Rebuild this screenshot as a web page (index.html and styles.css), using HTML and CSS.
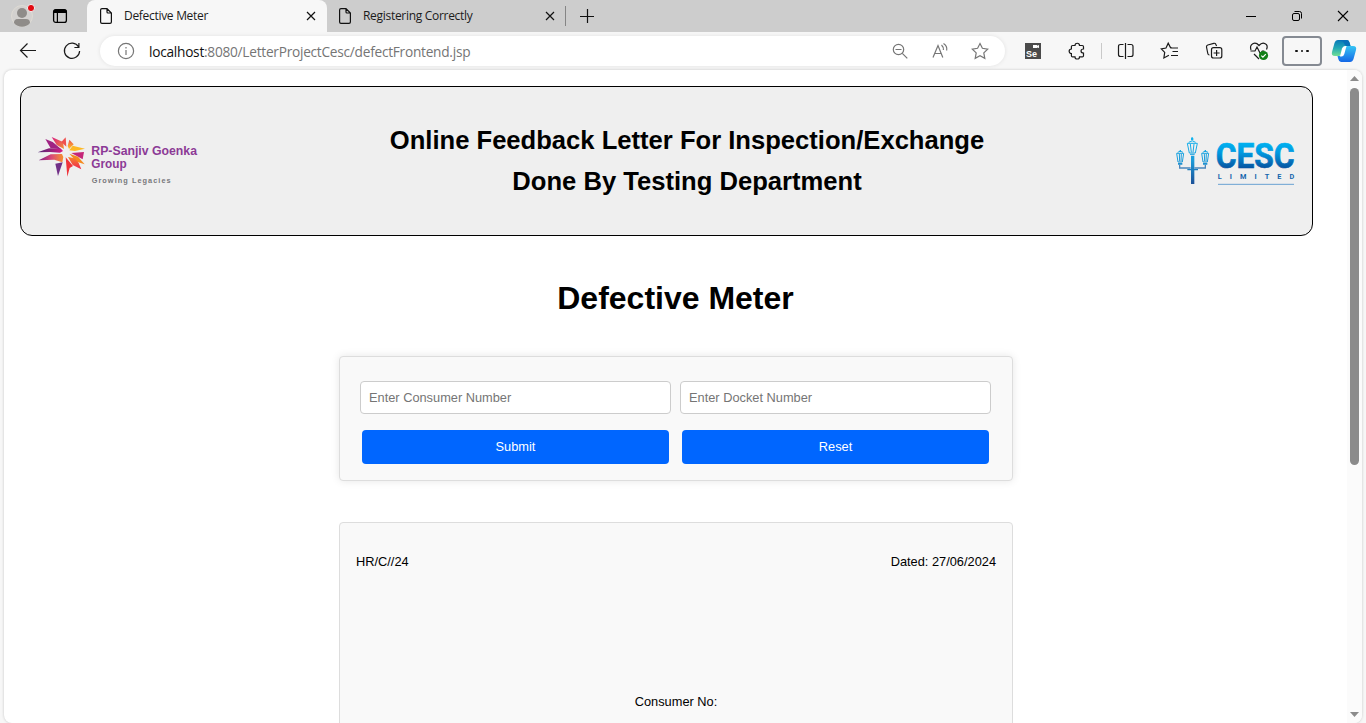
FILE: index.html
```html
<!DOCTYPE html>
<html lang="en">
<head>
<meta charset="utf-8">
<title>Defective Meter</title>
<link rel="stylesheet" href="styles.css">
</head>
<body>
<div class="browser">
  <div class="tabstrip">
    <svg class="avatar" width="26" height="28" viewBox="0 0 26 28"><circle cx="12" cy="16" r="10.5" fill="#d3d1cf" stroke="#dedbd4"/><circle cx="12" cy="13" r="5" fill="#8f8c89"/><path d="M4 23c0-5 4-4 8-4s8-1 8 4c-4 5-12 5-16 0z" fill="#8f8c89"/><circle cx="21" cy="8" r="3.6" fill="#e20b12" stroke="#eee"/></svg>
    <svg class="workspaces" width="16" height="16" viewBox="0 0 16 16"><rect x="1.600" y="1.600" width="12.800" height="12.800" rx="2.200" fill="none" stroke="#000" stroke-width="1.300"/><path d="M1.500 5V3Q1.500 1.500 3 1.500H13Q14.500 1.500 14.500 3V5ZM4.800 5H6V14H4.800Z"/></svg>
    <div class="tab active">
      <svg width="14" height="18" viewBox="0 0 14 18"><path d="M3 1.600h5l4.400 4.400v9q0 1.400-1.400 1.400H3q-1.400 0-1.400-1.400V3Q1.600 1.600 3 1.600zM8 1.800V5q0 1 1 1h3.300" fill="none" stroke="#111" stroke-width="1.200"/></svg>
      <span class="tab-title">Defective Meter</span>
      <svg class="close" width="10" height="10" viewBox="0 0 10 10"><path d="M1 1l8 8M9 1L1 9" stroke="#111" stroke-width="1.200"/></svg>
    </div>
    <div class="tab idle">
      <svg width="14" height="18" viewBox="0 0 14 18"><path d="M3 1.600h5l4.400 4.400v9q0 1.400-1.400 1.400H3q-1.400 0-1.400-1.400V3Q1.600 1.600 3 1.600zM8 1.800V5q0 1 1 1h3.300" fill="none" stroke="#111" stroke-width="1.200"/></svg>
      <span class="tab-title">Registering Correctly</span>
      <svg class="close" width="10" height="10" viewBox="0 0 10 10"><path d="M1 1l8 8M9 1L1 9" stroke="#111" stroke-width="1.200"/></svg>
    </div>
    <span class="tab-sep"></span>
    <svg class="new-tab" width="16" height="16" viewBox="0 0 16 16"><path d="M8.500 1v14M1 8.500h14" stroke="#111" stroke-width="1.200"/></svg>
    <div class="window-controls">
      <svg width="12" height="12" viewBox="0 0 12 12"><path d="M1 6.500h10" stroke="#000"/></svg>
      <svg width="12" height="12" viewBox="0 0 12 12"><g fill="none" stroke="#000"><rect x="1.500" y="3.500" width="7" height="7" rx="1.500"/><path d="M3.500 1.500h5q2 0 2 2v5"/></g></svg>
      <svg width="12" height="12" viewBox="0 0 12 12"><path d="M1 1l10 10M11 1L1 11" stroke="#000" stroke-width="1.100"/></svg>
    </div>
  </div>

  <div class="toolbar">
    <svg class="i back" viewBox="0 0 24 24"><path d="M20 11.500H4.500M11.500 4.500l-7 7 7 7"/></svg>
    <svg class="i reload" viewBox="0 0 24 24"><path d="M18.600 8A7.600 7.600 0 1 0 19.600 12M18.900 4v4.500h-4.500"/></svg>
    <div class="omnibox">
      <svg class="i gray" viewBox="0 0 24 24"><circle cx="12" cy="12" r="7.600"/><path d="M12 11v5M12 8v1.500"/></svg>
      <span class="url"><b>localhost</b>:8080/LetterProjectCesc/defectFrontend.jsp</span>
      <svg class="i gray" viewBox="0 0 24 24"><circle cx="10.500" cy="10.500" r="5.200"/><path d="M14.300 14.300l5 5M7.500 10.500h6"/></svg>
      <svg class="i gray" viewBox="0 0 24 24"><path d="M5 18.500L10 6.500l4.800 12M7 14.500h6.200M13.500 6q2.200 2 1.900 5M15.500 4.500q4 2.500 3.200 7"/></svg>
      <svg class="i gray" viewBox="0 0 24 24"><path d="M12 4.500l2.400 4.800 5.300.8-3.900 3.800 1 5.400-4.800-2.600-4.800 2.600 1-5.400-3.900-3.800 5.300-.8z"/></svg>
    </div>
    <svg class="i se" viewBox="0 0 24 24"><rect x="4" y="4" width="16" height="16" fill="#4b4b4b" stroke="none"/><path d="M12 6h4v.7l2-.7v3l-2-.6V9h-4z" fill="#fff" stroke="none"/><text x="5" y="18" textLength="11" lengthAdjust="spacingAndGlyphs">Se</text></svg>
    <svg class="i puzzle" viewBox="0 0 24 24"><path d="M10 6.500c0-3 4.500-3 4.500 0h2.800q1.200 0 1.200 1.200V10c-3.300 0-3.300 4 0 4v2.700q0 1.200-1.200 1.200h-2.800c0 2.800-4.500 2.800-4.500 0H7.600q-1.200 0-1.200-1.200V14.500c-3 0-3-4.500 0-4.500V7.700q0-1.200 1.200-1.200z"/></svg>
    <span class="sep"></span>
    <svg class="i split" viewBox="0 0 24 24"><path d="M9.500 5.500H6.500q-2 0-2 2v8q0 2 2 2h3M13.500 5.500h3.500q2 0 2 2v8q0 2-2 2h-3.500M11.500 4v16"/></svg>
    <svg class="i fav" viewBox="0 0 24 24"><path d="M13.500 8.600h-1L10.200 4.200 8 9l-4.700.8 3.400 3.600-.8 5.600 5-2.800M12.500 9H20M14.500 12.500H20M13 16.500H20"/></svg>
    <svg class="i collections" viewBox="0 0 24 24"><rect x="9.500" y="8.700" width="10.300" height="10.300" rx="2"/><path d="M14.600 11v6M11.600 14h6M7.500 16Q6 16 5.800 14.500L4.500 8Q4.300 6.500 5.800 6l6-1.700q1.500-.3 2 1l.8 1.700"/></svg>
    <svg class="i health" viewBox="0 0 24 24"><path d="M4 11C2 5 8 2 12 6.500c4-4.500 10-1.500 7.500 4M3.500 12H8l2-4 3.500 7 1.800-3h2M7 15l5 5"/><circle cx="16.500" cy="16.500" r="4.600" fill="#138018" stroke="none"/><path d="M14.300 16.600l1.600 1.500 2.900-3" stroke="#fff"/></svg>
    <div class="more"><i></i><i></i><i></i></div>
    <svg class="copilot" width="26" height="24" viewBox="0 0 26 24">
      <defs><linearGradient id="ca" x1="0" y1="0" x2="0" y2="1"><stop offset="0" stop-color="#0878b8"/><stop offset=".5" stop-color="#22a8b5"/><stop offset="1" stop-color="#72df94"/></linearGradient><linearGradient id="cb" x1="0" y1="0" x2="0" y2="1"><stop offset="0" stop-color="#36c5f4"/><stop offset="1" stop-color="#1467e6"/></linearGradient></defs>
      <path d="M7 1h9q2 0 2.700 3l.8 3h-4q-2.500 0-3.200 2.500L10.500 15q-.8 2-2.800 2H4q-4 0-3-4L3.500 4Q4.500 1 7 1z" fill="url(#ca)"/>
      <path d="M19 23h-9q-2 0-2.700-3L6.500 17h2q2.500 0 3.200-2.500L13.500 9q.8-2 2.800-2H22q4 0 3 4l-2.500 9q-1 3-3.500 3z" fill="url(#cb)"/>
      <path d="M7 1h9q2 0 2.700 3l.8 3h-4.200Q14 7 13 4q-.8-2-3-2z" fill="#0871b9"/>
      <path d="M15.500 7l-2.200 8q-.8 2.500-2.800 2.500L9 17.500l2-8q.8-2.500 3-2.500z" fill="#fff"/>
    </svg>
  </div>

  <div class="viewport">
    <main class="page">
      <header class="banner">
        <svg class="rpsg" width="162" height="52" viewBox="81 168 486 156">
          <defs>
            <linearGradient id="pm" x1="0" x2="1"><stop offset="0" stop-color="#4d2774"/><stop offset="1" stop-color="#d81b83"/></linearGradient>
            <linearGradient id="po" x1="0" x2="1"><stop offset="0" stop-color="#7b1f84"/><stop offset=".5" stop-color="#d8457a"/><stop offset="1" stop-color="#f6922f"/></linearGradient>
            <linearGradient id="mo" x1="0" x2="1" y1="0" y2="1"><stop offset="0" stop-color="#d81b83"/><stop offset="1" stop-color="#f79030"/></linearGradient>
            <linearGradient id="ro" x1="0" y1="1" x2="0" y2="0"><stop offset="0" stop-color="#ee2450"/><stop offset="1" stop-color="#f7852b"/></linearGradient>
            <linearGradient id="oy" x1="0" y1="0" x2="0" y2="1"><stop offset="0" stop-color="#ee4c54"/><stop offset="1" stop-color="#ffc81f"/></linearGradient>
          </defs>
          <path d="M83 217l34-12 36 1 6 7-9 5-30-2z" fill="url(#pm)"/>
          <path d="M106 177l22 9 26 22-32-3z" fill="#a02383"/>
          <path d="M125 171l34 15 3 21-22-12z" fill="url(#mo)"/>
          <path d="M167 172l2 28-15-14z" fill="#f0504e"/>
          <path d="M178 179l13 14-14 14-4-9z" fill="url(#oy)"/>
          <path d="M225 206l-30 7-17-2 10-14z" fill="#fdb924"/>
          <path d="M222 216l-4 22-34-19z" fill="#c52678"/>
          <path d="M224 253l-24-8-22-24 26 9z" fill="#f58a1f"/>
          <path d="M86 241l36-18 34-1 4 9-3 16-24-8z" fill="url(#po)"/>
          <path d="M214 268l-26-13-14-24 20 4 12 14z" fill="url(#ro)"/>
          <path d="M172 290l-5-58 22 26-10 6z" fill="#ef343a"/>
          <path d="M144 288l-8-37 22-4z" fill="#713087"/>
          <text class="rpsg-name" x="244" y="225" textLength="317" lengthAdjust="spacingAndGlyphs">RP-Sanjiv Goenka</text>
          <text class="rpsg-name" x="244" y="263" textLength="106" lengthAdjust="spacingAndGlyphs">Group</text>
          <text class="rpsg-tag" x="245" y="309" textLength="237">Growing Legacies</text>
        </svg>
        <h2 class="banner-title">Online Feedback Letter For Inspection/Exchange<br>Done By Testing Department</h2>
        <svg class="cesc" width="121" height="50" viewBox="45 48 363 150">
          <defs><linearGradient id="cg" gradientUnits="userSpaceOnUse" x1="0" y1="66" x2="0" y2="146"><stop offset="0" stop-color="#00b4f2"/><stop offset=".4" stop-color="#0099e0"/><stop offset="1" stop-color="#07529f"/></linearGradient>
          <linearGradient id="lg" gradientUnits="userSpaceOnUse" x1="0" y1="55" x2="0" y2="190"><stop offset="0" stop-color="#12b4ef"/><stop offset=".5" stop-color="#1c9ad8"/><stop offset="1" stop-color="#1b5299"/></linearGradient></defs>
          <g fill="none" stroke="url(#lg)" stroke-width="3">
            <path d="M82 70h30l-6 29H88zM86 67q11-9 21 0M91 72l3 25M102 72l-3 25M90 103h14"/>
            <path d="M50 100h21l-4 26H54zM53 97q8-7 16 0M58 102l1 22M64 102l-1 22"/>
            <path d="M125 100h21l-4 26h-13zM128 97q8-7 16 0M133 102l1 22M139 102l-1 22"/>
            <path d="M59 134v10h33M136 134v10h-33" stroke="#4a86bd" stroke-width="4"/>
          </g>
          <path d="M93 107h10v85H93zM93 55l3-5 4 5v6h-7zM59 90h4v6h-4zM134 90h4v6h-4zM54 129h13v5H54zM129 129h13v5h-13zM82 147h32v4H82z" fill="url(#lg)"/>
          <text class="cesc-name" x="167" y="143" textLength="237" lengthAdjust="spacingAndGlyphs">CESC</text>
          <text class="cesc-sub" x="173" y="176" textLength="230">LIMITED</text>
          <path d="M174 193h228" stroke="#69a2d2" stroke-width="3"/>
        </svg>
      </header>
      <h1 class="heading">Defective Meter</h1>
      <form class="panel search">
        <input class="field" type="text" placeholder="Enter Consumer Number">
        <input class="field" type="text" placeholder="Enter Docket Number">
        <button class="btn" type="button">Submit</button>
        <button class="btn" type="button">Reset</button>
      </form>
      <section class="panel letter">
        <div class="letter-top"><span>HR/C//24</span><span>Dated: 27/06/2024</span></div>
        <p class="consumer">Consumer No:</p>
      </section>
    </main>
    <div class="scrollbar">
      <svg width="9" height="5" viewBox="0 0 9 5"><path d="M0 5L4.500 0 9 5z" fill="#8b8b8b"/></svg>
      <div class="thumb"></div>
      <svg class="down" width="9" height="5" viewBox="0 0 9 5"><path d="M0 0h9L4.500 5z" fill="#8b8b8b"/></svg>
    </div>
  </div>
</div>
</body>
</html>
```
FILE: styles.css
```css
* { box-sizing: border-box; }
body { margin: 0; font-family: "Liberation Sans", Arial, sans-serif; overflow: hidden; }
svg { display: block; flex: none; }
.browser { width: 1366px; height: 723px; display: flex; flex-direction: column; background: #f7f7f7; overflow: hidden; }

.tabstrip { height: 32px; flex: none; display: flex; align-items: center; background: #cdcdcd; font-family: "Open Sans", "Noto Sans", sans-serif; }
.avatar { margin-left: 10px; align-self: flex-start; }
.workspaces { margin: 0 19px 0 16px; }
.tab { height: 32px; width: 240px; display: flex; align-items: center; padding: 0 11px 0 12px; }
.tab.active { background: #f7f7f7; border-radius: 8px 8px 0 0; }
.tab.idle { width: 238px; padding: 0 10px 0 11px; }
.tab-title { margin: -1px 0 0 11px; font-size: 12px; letter-spacing: -0.3px; color: #1b1b1b; white-space: nowrap; }
.close { margin-left: auto; }
.tab-sep { width: 1px; height: 20px; background: #858585; }
.new-tab { margin-left: 13px; }
.window-controls { margin: 0 17px 0 auto; display: flex; gap: 34px; }

.toolbar { height: 38px; flex: none; display: flex; align-items: center; padding-left: 16px; }
.i { width: 24px; height: 24px; fill: none; stroke: #1b1b1b; stroke-width: 1.2; }
.gray { stroke: #767676; }
.reload { margin: 0 16px 0 20px; }
.omnibox { width: 905px; height: 30px; flex: none; display: flex; align-items: center; gap: 16px; padding: 0 13px 0 14px; border-radius: 15px; background: #fff; box-shadow: 0 0 4px rgba(0,0,0,.09); }
.url { flex: 1; margin-left: -5px; font: 13.7px "Open Sans", "Noto Sans", sans-serif; letter-spacing: -0.26px; color: #757575; white-space: nowrap; }
.url b { font-weight: 400; color: #111; }
.se { margin-left: 16px; }
.se text { font: 700 8.500px "Liberation Sans", sans-serif; fill: #fff; stroke: none; }
.puzzle { margin-left: 20px; }
.sep { width: 1px; height: 16px; margin: 0 12px; background: #c9c9c9; }
.fav, .collections { margin-left: 20px; }
.health { margin-left: 21px; }
.more { width: 40px; height: 30px; flex: none; margin-left: 11px; border: 2px solid #858a92; border-radius: 4px; display: flex; align-items: center; justify-content: center; gap: 3px; }
.more i { width: 2.500px; height: 2.500px; border-radius: 50%; background: #111; }
.copilot { margin: 0 0 1px 9px; }

.viewport { flex: 1; margin: 0 4px; display: flex; background: #fff; border-radius: 8px; box-shadow: 0 0 3px rgba(0,0,0,.2); overflow: hidden; }
.page { width: 1343px; flex: none; height: 653px; padding: 16px 34px 0 16px; display: flex; flex-direction: column; align-items: center; overflow: hidden; }
.banner { width: 1293px; height: 150px; flex: none; display: flex; align-items: center; justify-content: space-between; padding: 0 16px; border: 1px solid #000; border-radius: 12px; background: #efefef; }
.banner-title { margin: 0; font-size: 25.6px; line-height: 41px; text-align: center; }
.rpsg { margin-top: 2px; }
.cesc { overflow: visible; }
.rpsg-name { font: 700 36px "Liberation Sans", sans-serif; fill: #8c3a96; }
.rpsg-tag { font: 700 22px "Liberation Sans", sans-serif; fill: #77787b; }
.cesc-name { font: 700 105px Roboto, "Open Sans", sans-serif; fill: url(#cg); stroke: url(#cg); stroke-width: 2; }
.cesc-sub { font: 700 22px Roboto, "Open Sans", sans-serif; fill: #1465ad; }
.heading { margin: 43px 0 0; padding-left: 18px; font-size: 32px; line-height: 38px; }
.panel { width: 674px; flex: none; margin-left: 19px; border: 1px solid #ddd; border-radius: 4px; background: #f9f9f9; }
.search { height: 125px; margin-top: 39px; padding: 24px 20px 0; display: grid; grid-template-columns: 311px 311px; grid-template-rows: 33px 34px; gap: 16px 9px; box-shadow: 0 0 8px rgba(0,0,0,.1); }
.field { width: 311px; height: 33px; padding: 0 8px; border: 1px solid #ccc; border-radius: 4px; background: #fff; font: 12.8px "Liberation Sans", Arial, sans-serif; }
.field::placeholder { color: #757575; opacity: 1; }
.btn { margin: 0 2px; padding: 0 0 1px; border: 0; border-radius: 4px; background: #0066ff; color: #fff; font: 12.8px "Liberation Sans", Arial, sans-serif; }
.letter { height: 260px; margin-top: 41px; padding: 31px 16px 0; font-size: 12.8px; line-height: 16px; }
.letter-top { display: flex; justify-content: space-between; }
.consumer { margin: 124px 0 0; text-align: center; }
.scrollbar { width: 15px; display: flex; flex-direction: column; align-items: center; background: #fbfbfb; padding: 6px 0 6px; }
.thumb { width: 9px; height: 377px; margin-top: 7px; border-radius: 5px; background: #8b8b8b; }
.down { margin-top: auto; }
```
